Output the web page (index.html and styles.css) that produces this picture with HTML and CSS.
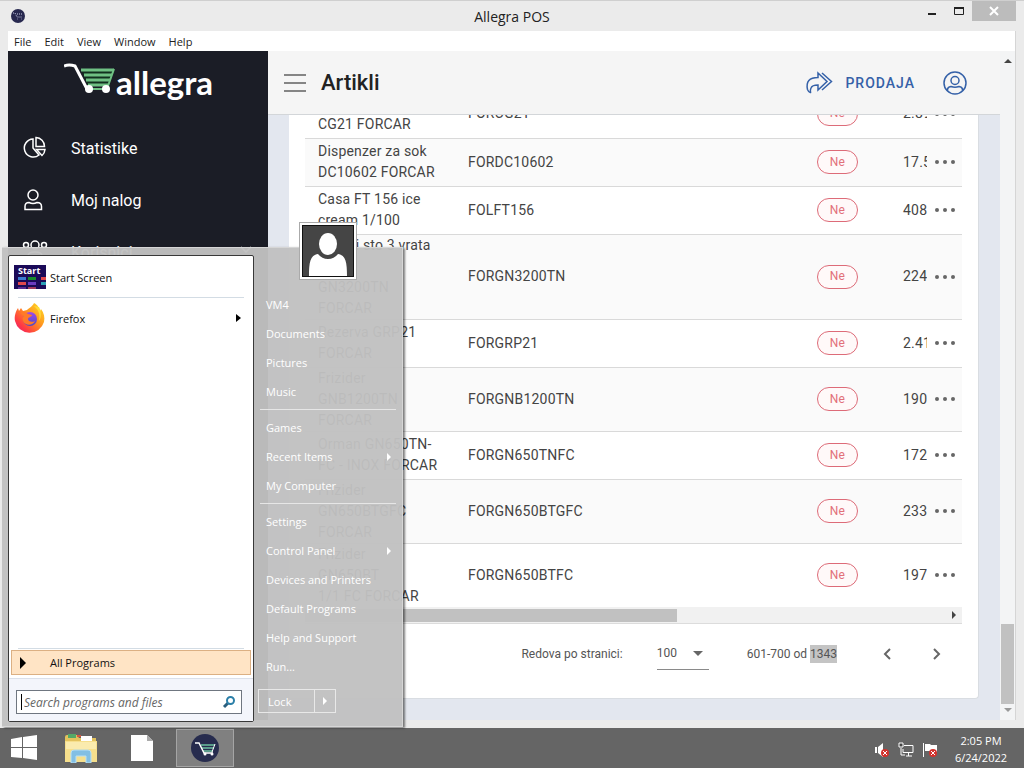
FILE: index.html
```html
<!DOCTYPE html>
<html lang="sr-Latn">

<head>
    <meta charset="UTF-8">
    <meta name="viewport" content="width=device-width, initial-scale=1.0">
    <title>Allegra POS</title>
    <link rel="stylesheet" href="styles.css">
</head>

<body>
    <div class="window">
        <div class="titlebar">
            <svg class="app-icon" viewBox="0 0 16 16" width="16" height="16">
                <circle cx="8" cy="8" r="7" fill="#27284f" />
                <path d="M3 5h2l2 4h5M7 6h5M7 11h.5M11 11h.5" stroke="#c9cbe6" stroke-dasharray="1 1" fill="none" />
            </svg>
            <div class="title">Allegra POS</div>
            <div class="win-buttons">
                <button aria-label="Minimize"><svg viewBox="0 0 12 12" width="12" height="12"><path d="M2 8h8v2H2z" fill="#222" /></svg></button>
                <button aria-label="Maximize"><svg viewBox="0 0 12 12" width="12" height="12"><path d="M1.500 3v6.500h9V3z" fill="none" stroke="#222" /><path d="M1 2h10v2H1z" fill="#222" /></svg></button>
                <button class="close" aria-label="Close"><svg viewBox="0 0 12 12" width="12" height="12"><path d="M2 2l8 8M10 2l-8 8" stroke="#fff" stroke-width="2" /></svg></button>
            </div>
        </div>
        <div class="client">
            <div class="menubar">
                <button>File</button>
                <button>Edit</button>
                <button>View</button>
                <button>Window</button>
                <button>Help</button>
            </div>
            <div class="app">
                <div class="sidebar">
                    <div class="logo">
                        <svg viewBox="0 0 52 32" width="52" height="32">
                            <path d="M17 6h34l-6 17H24z" fill="#12301f" />
                            <path d="M17 7h33M20 12h28M22 17h24M24 22h21" stroke="#6fc083" stroke-width="3" />
                            <path d="M50 6l-6 17" stroke="#6fc083" stroke-width="2" />
                            <path d="M0 3q5-2 11 0L23 26" stroke="#fff" stroke-width="3" fill="none" />
                            <path d="M26 26h14" stroke="#6fc083" stroke-width="2" />
                            <circle cx="25" cy="26" r="4" fill="#fff" />
                            <circle cx="42" cy="26" r="4" fill="#fff" />
                        </svg>
                        <span>allegra</span>
                    </div>
                    <a class="nav" href="#">
                        <svg viewBox="0 0 24 24" width="24" height="24"><path d="M10 3a9 9 0 1 0 6 16l-6-7z" /><path d="M13 1.500v9h8.500a9 9 0 0 0-8.500-9zM13.500 13.500h8.500a9 9 0 0 1-3 6z" /></svg>
                        <span>Statistike</span>
                    </a>
                    <a class="nav" href="#">
                        <svg viewBox="0 0 24 24" width="24" height="24"><circle cx="10" cy="7" r="5" /><path d="M2 21.500v-3q0-4 4-4 4 2 8 0 4.500 0 4.500 4v3z" /></svg>
                        <span>Moj nalog</span>
                    </a>
                    <a class="nav" href="#">
                        <svg viewBox="0 0 26 24" width="26" height="24"><circle cx="4" cy="5" r="2.500" /><circle cx="13" cy="5" r="4" /><circle cx="22" cy="5" r="2.500" /><path d="M6 20v-4q0-4 7-4t7 4v4z" /></svg>
                        <span>Korisnici</span>
                        <svg class="chevron" viewBox="0 0 12 12" width="12" height="12"><path d="M1 1l5 5 5-5" /></svg>
                    </a>
                </div>
                <div class="main">
                    <div class="header">
                        <button class="burger" aria-label="Meni"><svg viewBox="0 0 22 20" width="22" height="20"><path d="M0 2h22M0 10h22M0 18h22" stroke="#858585" stroke-width="2" /></svg></button>
                        <h1>Artikli</h1>
                        <a class="sale" href="#">
                            <svg viewBox="0 0 28 24" width="28" height="24"><path d="M13 2l9 8.500-9 8.500v-5q-6 0-7 3-1 2-.5 4.500-1.500.5-3-3-2.500-12 10.500-12z" /><path d="M17 2l9.500 8.500L17 19" /></svg>
                            <span>PRODAJA</span>
                        </a>
                        <button class="account" aria-label="Nalog"><svg viewBox="0 0 24 24" width="24" height="24"><circle cx="12" cy="12" r="11" /><circle cx="12" cy="9.500" r="4" /><path d="M4.500 20v-1q0-3 3.500-3.500 4 1.500 8 0 3.500.5 3.500 3.500v1" /></svg></button>
                    </div>
                    <div class="page">
                        <div class="card">
                            <table>
                                <colgroup><col class="c-name"><col><col class="c-flag"><col class="c-price"><col class="c-more"></colgroup>
                                <tr><td>Dispenzer sok<br>CG21 FORCAR</td><td>FORCG21</td><td><span class="chip">Ne</span></td><td>2.890</td><td><button class="more" aria-label="Opcije"><i></i><i></i><i></i></button></td></tr>
                                <tr><td>Dispenzer za sok DC10602 FORCAR</td><td>FORDC10602</td><td><span class="chip">Ne</span></td><td>17.520</td><td><button class="more" aria-label="Opcije"><i></i><i></i><i></i></button></td></tr>
                                <tr><td>Casa FT 156 ice cream 1/100</td><td>FOLFT156</td><td><span class="chip">Ne</span></td><td>408</td><td><button class="more" aria-label="Opcije"><i></i><i></i><i></i></button></td></tr>
                                <tr><td>Hladni sto 3 vrata<br>3200<br>GN3200TN<br>FORCAR</td><td>FORGN3200TN</td><td><span class="chip">Ne</span></td><td>224</td><td><button class="more" aria-label="Opcije"><i></i><i></i><i></i></button></td></tr>
                                <tr><td>Rezerva GRP21<br>FORCAR</td><td>FORGRP21</td><td><span class="chip">Ne</span></td><td>2.410</td><td><button class="more" aria-label="Opcije"><i></i><i></i><i></i></button></td></tr>
                                <tr><td>Frizider<br>GNB1200TN<br>FORCAR</td><td>FORGNB1200TN</td><td><span class="chip">Ne</span></td><td>190</td><td><button class="more" aria-label="Opcije"><i></i><i></i><i></i></button></td></tr>
                                <tr><td>Orman GN650TN-<br>FC - INOX FORCAR</td><td>FORGN650TNFC</td><td><span class="chip">Ne</span></td><td>172</td><td><button class="more" aria-label="Opcije"><i></i><i></i><i></i></button></td></tr>
                                <tr><td>Frizider<br>GN650BTGFC<br>FORCAR</td><td>FORGN650BTGFC</td><td><span class="chip">Ne</span></td><td>233</td><td><button class="more" aria-label="Opcije"><i></i><i></i><i></i></button></td></tr>
                                <tr><td>Frizider<br>GN650BT<br>1/1 FC FORCAR</td><td>FORGN650BTFC</td><td><span class="chip">Ne</span></td><td>197</td><td><button class="more" aria-label="Opcije"><i></i><i></i><i></i></button></td></tr>
                            </table>
                            <div class="hscroll"><div class="thumb"></div><svg viewBox="0 0 8 8" width="8" height="8"><path d="M2 0l4 4-4 4z" fill="#444" /></svg></div>
                            <div class="pager">
                                <label for="rows">Redova po stranici:</label>
                                <div class="select">
                                    <select id="rows"><option>100</option></select>
                                    <svg viewBox="0 0 10 5" width="10" height="5"><path d="M0 0h10L5 5z" fill="#666" /></svg>
                                </div>
                                <span class="range">601-700 od <mark>1343</mark></span>
                                <button aria-label="Prethodna"><svg viewBox="0 0 14 14" width="14" height="14"><path d="M10 2L5 7l5 5" /></svg></button>
                                <button aria-label="Sledeca"><svg viewBox="0 0 14 14" width="14" height="14"><path d="M4 2l5 5-5 5" /></svg></button>
                            </div>
                        </div>
                    </div>
                </div>
                <div class="vscroll">
                    <svg viewBox="0 0 8 5" width="8" height="5"><path d="M0 5l4-4 4 4z" fill="#444" /></svg>
                    <div class="thumb"></div>
                    <svg viewBox="0 0 8 5" width="8" height="5"><path d="M0 0l4 4 4-4z" fill="#999" /></svg>
                </div>
            </div>
        </div>
    </div>

    <div class="start-menu">
        <div class="programs">
            <a class="program" href="#">
                <svg viewBox="0 0 32 24" width="32" height="24">
                    <path d="M0 0h32v24H0z" fill="#1b0a58" />
                    <path d="M4 12h8v3H4z" fill="#3a7bd0" /><path d="M14 12h8v3h-8z" fill="#178a2c" /><path d="M27 12h5v3h-5z" fill="#e0484c" />
                    <path d="M4 17h8v3H4z" fill="#e0484c" /><path d="M14 17h8v3h-8z" fill="#6a3cc0" /><path d="M27 17h5v3h-5z" fill="#2aa0b8" />
                    <path d="M4 22h8v2H4z" fill="#5a2a90" /><path d="M14 22h8v2h-8z" fill="#a03a60" />
                    <text class="tile-text" x="4" y="9">Start</text>
                </svg>
                <span>Start Screen</span>
            </a>
            <hr>
            <a class="program" href="#">
                <svg viewBox="0 0 32 32" width="32" height="32">
                    <defs>
                        <linearGradient id="fox" x1="1" y1="0" x2="0" y2="1"><stop offset="0" stop-color="#ffe226" /><stop offset=".4" stop-color="#ff9a1f" /><stop offset=".75" stop-color="#ff3d42" /><stop offset="1" stop-color="#e3127e" /></linearGradient>
                        <linearGradient id="globe" x1="0" y1="0" x2="0" y2="1"><stop offset="0" stop-color="#a04ae8" /><stop offset="1" stop-color="#4b4ac8" /></linearGradient>
                    </defs>
                    <path d="M20 1c4 2 5 5 6 8l1-2c3 4 4 8 3 13A15 15 0 0 1 1 19C0 14 2 9 4 6l1 3 2-3 2 3 4-1c2-2 6-4 7-7z" fill="url(#fox)" />
                    <circle cx="16" cy="17" r="7" fill="url(#globe)" />
                    <path d="M6 11c3-2 6-1 8 1l4 1c0 2-4 2-4 4s3 4 7 2c-2 5-10 5-12 0-1-3 0-4 1-5z" fill="#ff7a28" />
                    <path d="M20 4c6 5 6 10 5 15 3-4 2-10 0-14z" fill="#ffdc36" />
                </svg>
                <span>Firefox</span>
                <svg class="arrow" viewBox="0 0 5 8" width="5" height="8"><path d="M0 0l5 4-5 4z" /></svg>
            </a>
            <div class="space"></div>
            <hr>
            <button class="all"><svg viewBox="0 0 6 12" width="6" height="12"><path d="M0 0l6 6-6 6z" /></svg><span>All Programs</span></button>
            <div class="search">
                <div class="search-box">
                    <span class="caret"></span>
                    <input type="text" placeholder="Search programs and files" aria-label="Search programs and files">
                    <svg viewBox="0 0 14 14" width="14" height="14"><path d="M2 12l4-4" stroke="#2b5f7e" stroke-width="3" /><circle cx="8.500" cy="5.500" r="3.500" fill="#fff" stroke="#2b7fa8" stroke-width="2" /></svg>
                </div>
            </div>
        </div>
        <div class="places">
            <a href="#">VM4</a>
            <a href="#">Documents</a>
            <a href="#">Pictures</a>
            <a href="#">Music</a>
            <hr>
            <a href="#">Games</a>
            <a href="#">Recent Items<svg viewBox="0 0 4 8" width="4" height="8"><path d="M0 0l4 4-4 4z" /></svg></a>
            <a href="#">My Computer</a>
            <hr>
            <a href="#">Settings</a>
            <a href="#">Control Panel<svg viewBox="0 0 4 8" width="4" height="8"><path d="M0 0l4 4-4 4z" /></svg></a>
            <a href="#">Devices and Printers</a>
            <a href="#">Default Programs</a>
            <a href="#">Help and Support</a>
            <a href="#">Run...</a>
            <div class="lock">
                <button>Lock</button>
                <button aria-label="More"><svg viewBox="0 0 4 8" width="4" height="8"><path d="M0 0l4 4-4 4z" /></svg></button>
            </div>
        </div>
        <svg class="avatar" viewBox="0 0 50 50" width="50" height="50">
            <path d="M0 0h50v50H0z" fill="#454545" />
            <ellipse cx="25" cy="18" rx="9" ry="11" fill="#fff" />
            <path d="M6 50c0-13 1-21 9-22q4 5 10 5t10-5c8 1 9 9 9 22z" fill="#fff" />
        </svg>
    </div>

    <div class="taskbar">
        <button aria-label="Start"><svg viewBox="0 0 26 26" width="26" height="26"><path d="M0 4l11-2v10H0zM12 2l14-2v12H12zM0 13h11v10L0 22zM12 13h14v12l-14-2z" fill="#fff" /></svg></button>
        <button aria-label="File Explorer"><svg viewBox="0 0 34 30" width="34" height="30">
            <path d="M1 4q0-2 2-2h10l2 3h17v24H1z" fill="#e3c25c" /><path d="M4 1h8v4H4z" fill="#55a868" /><path d="M17 3h11v5H17z" fill="#fff" /><path d="M13 2h4v2h-4z" fill="#d25743" />
            <path d="M1 8h32v21H1z" fill="#f6df8c" /><path d="M2 9h30v7H2z" fill="#faebae" />
            <path d="M7 30V20q0-3 3-3h14q3 0 3 3v10h-5v-7H12v7z" fill="#82bfe4" stroke="#b8e0f5" />
        </svg></button>
        <button aria-label="New document"><svg viewBox="0 0 22 28" width="22" height="28"><path d="M0 1h16l6 6v20H0z" fill="#fff" /><path d="M16 1v6h6z" fill="#aaa" /></svg></button>
        <button class="active" aria-label="Allegra POS"><svg viewBox="0 0 28 28" width="28" height="28">
            <circle cx="14" cy="14" r="14" fill="#272c4e" />
            <path d="M10 11h14M11 14h12M12 17h10" stroke="#6cc0a0" stroke-width="1.500" /><path d="M24 10l-3 8" stroke="#fff" />
            <path d="M4 9h4l5 10h9" stroke="#fff" stroke-width="1.500" fill="none" /><circle cx="14" cy="20" r="1.500" fill="#fff" /><circle cx="21" cy="20" r="1.500" fill="#fff" />
        </svg></button>
        <div class="tray">
            <svg viewBox="0 0 16 16" width="16" height="16"><path d="M1 5h2v6H1zM4 5l5-4v14l-5-4z" fill="#fff" /><circle cx="11" cy="11" r="4" fill="#d3322d" /><path d="M9 9l4 4M13 9l-4 4" stroke="#fff" /></svg>
            <svg viewBox="0 0 16 16" width="16" height="16"><path d="M6 3.500h9v7H5V7M8 14h6M10.500 11v3M3 6v7h4" stroke="#fff" fill="none" /><path d="M1 1h4v4H1z" stroke="#fff" fill="#444" /></svg>
            <svg viewBox="0 0 16 16" width="16" height="16"><path d="M1 1h1v14H1z" fill="#fff" /><path d="M3 2h5l1 1h6v7H9L8 9H3z" fill="#fff" /><circle cx="11" cy="11" r="4" fill="#d3322d" /><path d="M9 9l4 4M13 9l-4 4" stroke="#fff" /></svg>
        </div>
        <div class="clock">2:05 PM<br>6/24/2022</div>
    </div>
</body>

</html>
```
FILE: styles.css
```css
* {
    margin: 0;
    padding: 0;
    box-sizing: border-box;
}

body {
    display: flex;
    flex-direction: column;
    position: relative;
    height: 100vh;
    overflow: hidden;
    font-family: "Open Sans", sans-serif;
    font-size: 11px;
    color: #222;
}

button {
    border: none;
    background: none;
    font: inherit;
    color: inherit;
    display: flex;
    align-items: center;
    justify-content: center;
}

a {
    color: inherit;
    text-decoration: none;
}

svg {
    flex-shrink: 0;
    display: block;
}

/* window frame */
.window {
    flex: 1;
    min-height: 0;
    display: flex;
    flex-direction: column;
    background: #ebebeb;
    border-top: 1px solid #cfcfcf;
    padding: 0 8px 8px;
}

.titlebar {
    display: flex;
    align-items: center;
    height: 30px;
    flex-shrink: 0;
}

.app-icon {
    margin-left: 2px;
}

.title {
    flex: 1;
    padding-left: 80px;
    text-align: center;
    font-size: 14px;
}

.win-buttons {
    display: flex;
    align-self: flex-start;
}

.win-buttons button {
    width: 27px;
    height: 20px;
}

.win-buttons .close {
    width: 44px;
    background: #bcbcbc;
}

.client {
    flex: 1;
    min-height: 0;
    display: flex;
    flex-direction: column;
    border-right: 1px solid #d5d5d5;
}

.menubar {
    display: flex;
    gap: 13px;
    height: 20px;
    padding-left: 6px;
    background: #fff;
}

.app {
    flex: 1;
    min-height: 0;
    display: flex;
    font-family: Roboto, sans-serif;
}

/* sidebar */
.sidebar {
    width: 260px;
    background: #1b1d26;
    color: #fff;
    overflow: hidden;
}

.logo {
    display: flex;
    height: 71px;
    padding: 12px 0 0 56px;
    font-family: Lato, sans-serif;
    font-size: 33px;
    line-height: 38px;
    font-weight: bold;
}

.nav {
    display: flex;
    align-items: center;
    height: 52px;
    padding: 0 16px 0 14px;
    font-size: 16px;
}

.nav span {
    flex: 1;
}

.nav svg {
    width: 26px;
    margin-right: 23px;
    fill: none;
    stroke: #fff;
    stroke-width: 1.5;
}

.nav .chevron {
    width: 12px;
    margin-right: 0;
}

/* main */
.main {
    flex: 1;
    min-width: 0;
    display: flex;
    flex-direction: column;
}

.header {
    display: flex;
    align-items: center;
    height: 64px;
    flex-shrink: 0;
    padding: 0 33px 0 16px;
    background: #f5f5f5;
    border-bottom: 1px solid #d3d6d9;
}

.header h1 {
    flex: 1;
    margin-left: 15px;
    font-size: 22px;
    font-weight: 500;
}

.sale {
    display: flex;
    align-items: center;
    gap: 12px;
    margin-right: 28px;
    font-size: 14px;
    font-weight: 500;
    letter-spacing: 1px;
    color: #3561a8;
}

.sale svg,
.account svg {
    fill: none;
    stroke: #3561a8;
    stroke-width: 1.5;
}

/* scrolled to the end of the list */
.page {
    flex: 1;
    min-height: 0;
    display: flex;
    flex-direction: column;
    justify-content: flex-end;
    padding: 0 21px 21px;
    background: #e3e7ef;
    overflow: hidden;
}

.card {
    flex-shrink: 0;
    padding: 0 16px 15px;
    background: #fff;
    border: 1px solid #d9dde2;
    border-width: 0 1px 1px 0;
    border-radius: 4px;
}

table {
    width: 100%;
    table-layout: fixed;
    border-collapse: collapse;
    font-size: 14px;
    line-height: 21px;
    color: #444;
}

.c-name {
    width: 150px;
}

.c-flag {
    width: 86px;
}

.c-price {
    width: 37px;
}

.c-more {
    width: 35px;
}

td {
    height: 48px;
    padding: 0 0 0 13px;
    border-bottom: 1px solid #d9d9d9;
    overflow: hidden;
    letter-spacing: 0.2px;
}

td:nth-child(4) {
    white-space: nowrap;
}

td:last-child {
    padding: 0;
}

tr:nth-child(even) {
    background: #fafafa;
}

tr:last-child td {
    border: none;
    height: 64px;
}

.chip {
    display: flex;
    align-items: center;
    justify-content: center;
    width: 41px;
    height: 24px;
    border: 1px solid #dd6b78;
    border-radius: 12px;
    background: #fff9f9;
    color: #e2707a;
    font-size: 12px;
}

.more {
    gap: 4px;
    width: 35px;
    height: 24px;
}

.more i {
    width: 4px;
    height: 4px;
    border-radius: 2px;
    background: #666;
}

.hscroll {
    display: flex;
    align-items: center;
    height: 17px;
    padding-right: 4px;
    justify-content: space-between;
    background: #f1f1f1;
    border-bottom: 1px solid #dcdcdc;
}

.hscroll .thumb {
    width: 57%;
    height: 13px;
    background: #c1c1c1;
}

.pager {
    display: flex;
    align-items: center;
    justify-content: flex-end;
    height: 59px;
    padding-right: 10px;
    font-size: 12px;
    color: #555;
}

.select {
    display: flex;
    align-items: center;
    width: 52px;
    height: 33px;
    margin: 0 38px 0 34px;
    border-bottom: 1px solid #8a8a8a;
}

.select select {
    flex: 1;
    width: 30px;
    border: none;
    background: none;
    appearance: none;
    font: inherit;
    color: inherit;
}

.select svg {
    margin-right: 6px;
}

mark {
    display: inline-block;
    line-height: 18px;
    background: #c4c4c4;
    color: inherit;
}

.range {
    margin-right: 35px;
}

.pager button {
    width: 30px;
    height: 30px;
    margin-left: 20px;
}

.pager .range + button {
    margin-left: 0;
}

.pager button svg {
    fill: none;
    stroke: #666;
    stroke-width: 2;
}

.vscroll {
    display: flex;
    flex-direction: column;
    align-items: center;
    width: 15px;
    padding: 7px 0;
    background: #f3f4f5;
}

.vscroll .thumb {
    width: 13px;
    height: 80px;
    margin: auto 0 4px;
    background: #c1c1c1;
}

/* start menu */
.start-menu {
    position: absolute;
    left: 2px;
    bottom: 41px;
    display: flex;
    width: 401px;
    height: 480px;
    padding: 7px 6px;
    background: rgba(193, 193, 193, 0.96);
    border: 1px solid #d6d6d6;
    border-left: none;
    box-shadow: 2px 1px 2px rgba(0, 0, 0, 0.5);
}

.programs {
    display: flex;
    flex-direction: column;
    width: 246px;
    height: 467px;
    background: #fff;
    border: 1px solid #383838;
    border-radius: 2px;
    color: #111;
    padding-top: 5px;
}

.program {
    display: flex;
    align-items: center;
    height: 32px;
    padding: 0 12px 0 5px;
}

.program span {
    flex: 1;
    margin-left: 4px;
}

.program + hr {
    margin-bottom: 4px;
}

.programs hr {
    height: 1px;
    margin: 4px 9px;
    border: none;
    background: #d3dce4;
}

.tile-text {
    fill: #fff;
    font-size: 9px;
    font-weight: bold;
}

.space {
    flex: 1;
}

.programs .space + hr {
    margin: 0 9px 1px;
}

.all {
    justify-content: flex-start;
    gap: 24px;
    height: 25px;
    margin: 0 2px 3px;
    padding-left: 8px;
    border: 1px solid #dcb083;
    background: #ffe4c5;
}

.search {
    height: 43px;
    padding: 11px 11px 0 7px;
    border-top: 1px solid #dbe0ea;
    background: #f3f5fb;
}

.search-box {
    display: flex;
    align-items: center;
    height: 24px;
    padding: 0 5px 0 4px;
    background: #fff;
    border: 1px solid #6f7680;
}

.caret {
    width: 1px;
    height: 16px;
    background: #000;
}

.search input {
    flex: 1;
    min-width: 0;
    padding-left: 2px;
    border: none;
    outline: none;
    font: inherit;
    font-size: 12px;
}

.search input::placeholder {
    font-style: italic;
    color: #666;
}

.places {
    flex: 1;
    padding: 35px 0 0 4px;
    color: #fff;
}

.places a {
    display: flex;
    align-items: center;
    justify-content: space-between;
    height: 29px;
    padding: 0 5px 0 8px;
}

.places svg {
    fill: #fff;
}

.places hr {
    height: 1px;
    margin: 3px 0 3px 2px;
    border: none;
    background: #e6e6e6;
}

.lock {
    display: flex;
    width: 78px;
    height: 24px;
    margin-top: 8px;
    border: 1px solid #e8e8e8;
}

.lock button {
    width: 20px;
}

.lock button:first-child {
    flex: 1;
    justify-content: flex-start;
    padding-left: 9px;
    border-right: 1px solid #e8e8e8;
}

.avatar {
    position: absolute;
    left: 300px;
    top: -23px;
    width: 52px;
    height: 52px;
    border: 1px solid #111;
    outline: 2px solid #fff;
    box-shadow: 0 0 0 3px #aaa;
}

/* taskbar */
.taskbar {
    display: flex;
    height: 40px;
    flex-shrink: 0;
    background: #656565;
    color: #fff;
}

.taskbar button {
    width: 61px;
}

.taskbar button:first-child {
    width: 48px;
}

.taskbar button:nth-child(2) {
    width: 66px;
}

.taskbar button:nth-child(3) {
    width: 56px;
    margin-right: 6px;
}

.taskbar .active {
    width: 58px;
    margin: 1px 0;
    background: #808080;
    border: 1px solid #a5a5a5;
}

.tray {
    flex: 1;
    display: flex;
    align-items: center;
    justify-content: flex-end;
    gap: 8px;
    padding-top: 4px;
}

.clock {
    width: 86px;
    padding-top: 4px;
    font-size: 11px;
    line-height: 17px;
    text-align: center;
}
```
